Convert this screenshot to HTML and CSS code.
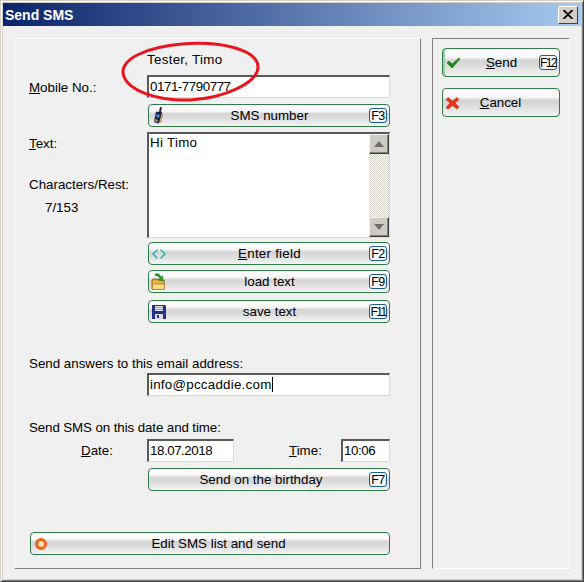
FILE: index.html
```html
<!DOCTYPE html>
<html lang="en">
<head>
  <meta charset="UTF-8">
  <title>Send SMS</title>
  <link rel="stylesheet" href="styles.css">
</head>
<body>
  <div class="window">
    <div class="titlebar">
      <span class="title">Send SMS</span>
      <span class="close"><svg width="10" height="9" viewBox="0 0 10 9"><path d="M0 0l9 9M1 0l9 9M9 0L0 9M10 0L1 9" fill="none" stroke="#000" stroke-width="1.200"/></svg></span>
    </div>
    <div class="content">
      <div class="panel-left">
        <svg class="ring" width="144" height="62" viewBox="0 0 144 62"><path d="M62 3C100 0 136 8 138 25C139 42 104 57 70 59C38 60 6 50 3 32C2 17 28 6 62 3Z" fill="none" stroke="#e8141f" stroke-width="3"/></svg>

        <div class="row row-name"><span></span><div class="name">Tester, Timo</div></div>
        <div class="row row-mobile">
          <label class="label label-mobile"><u>M</u>obile No.:</label>
          <div class="input digits">0171-7790777</div>
        </div>
        <div class="row row-btn1">
          <span></span>
          <div class="btn">
            <svg class="icon" width="12" height="18" viewBox="0 0 12 18"><path d="M8 0l2 .5-1 4 1 1-3 11-4-1-1-1 2-10 3 .5z" fill="#16243f"/><path d="M4.500 7l3.500 1-1 3-3-1z" fill="#3f86d8"/><path d="M3 12l3 1-.5 2-3-.8z" fill="#d98a3a"/><path d="M10 6l1 1-2 9-1-1z" fill="#c9803a"/></svg>
            <span class="btn-text">SMS number</span>
            <span class="key">F3</span>
          </div>
        </div>
        <div class="row row-text">
          <div class="text-labels">
            <label class="label"><u>T</u>ext:</label>
            <div class="label count-label">Characters/Rest:</div>
            <div class="label count">7/153</div>
          </div>
          <div class="textarea">
            <div class="textarea-body">Hi Timo</div>
            <div class="scrollbar">
              <span class="scroll-btn"><i class="arrow-up"></i></span>
              <span class="scroll-track"></span>
              <span class="scroll-btn"><i class="arrow-down"></i></span>
            </div>
          </div>
        </div>
        <div class="row row-btn2">
          <span></span>
          <div class="btn">
            <svg class="icon" width="14" height="12" viewBox="0 0 14 12"><path d="M5.500 1.500L1 6l4.500 4.500M8.500 1.500L13 6l-4.500 4.500" fill="none" stroke="#2ab5b5" stroke-width="1.500"/></svg>
            <span class="btn-text text-loose"><u>E</u>nter field</span>
            <span class="key">F2</span>
          </div>
        </div>
        <div class="row row-btn3">
          <span></span>
          <div class="btn">
            <svg class="icon icon-folder" width="16" height="18" viewBox="0 0 16 18"><path d="M1 8l1-2h4l1 1h6v9.500H1z" fill="#e8b23c" stroke="#8a6512"/><path d="M1.500 11h12l-.5 5.500H1.500z" fill="#f8dc84" stroke="#a87c1a" stroke-width=".7"/><path d="M4 1c3-1 5 0 6 3l2-1-.5 5L7 6.500 9 5.500C8 3.500 6 2.500 4 2.500z" fill="#1f9a2c" stroke="#0f6a1a" stroke-width=".4"/></svg>
            <span class="btn-text">load text</span>
            <span class="key">F9</span>
          </div>
        </div>
        <div class="row row-btn4">
          <span></span>
          <div class="btn">
            <svg class="icon" width="14" height="14" viewBox="0 0 14 14"><path d="M0 0h13l1 1v13H0z" fill="#24318c"/><path d="M3 1h8v5H3z" fill="#e6e6ee"/><path d="M3 2.500h8M3 4.500h8" stroke="#9a9ab0"/><path d="M3 9h8v5H3z" fill="#d8d8e6"/><path d="M5 10h2v3H5z" fill="#24318c"/></svg>
            <span class="btn-text">save text</span>
            <span class="key key-long">F11</span>
          </div>
        </div>

        <div class="label heading heading-email">Send answers to this email address:</div>
        <div class="row row-email">
          <span></span>
          <div class="input text-loose">info@pccaddie.com<i class="caret"></i></div>
        </div>

        <div class="label heading heading-date">Send SMS on this date and time:</div>
        <div class="row row-date">
          <label class="label label-date"><u>D</u>ate:</label>
          <div class="date-fields">
            <div class="input input-date digits">18.07.2018</div>
            <label class="label label-time"><u>T</u>ime:</label>
            <div class="input input-time digits">10:06</div>
          </div>
        </div>
        <div class="row row-birthday">
          <span></span>
          <div class="btn btn-birthday">
            <span class="btn-text">Send on the birthday</span>
            <span class="key">F7</span>
          </div>
        </div>
        <div class="btn btn-wide">
          <svg class="icon" width="14" height="14" viewBox="0 0 14 14"><circle cx="7" cy="7" r="4.500" fill="#ffd9b0" stroke="#f0641e" stroke-width="3"/></svg>
          <span class="btn-text">Edit SMS list and send</span>
        </div>
      </div>

      <div class="panel-right">
        <div class="btn btn-side btn-default">
          <svg class="icon" width="15" height="12" viewBox="0 0 15 12"><path d="M1 6l2-2 3 3 7-6 1 1-8 9z" fill="#1d8a1d" stroke="#0d5c0d" stroke-width=".5"/></svg>
          <span class="btn-text"><u>S</u>end</span>
          <span class="key key-long">F12</span>
        </div>
        <div class="btn btn-side btn-cancel">
          <svg class="icon" width="13" height="13" viewBox="0 0 13 13"><path d="M2 1l4.500 3.500L11 1l2 2-4 3.500 4 4-2 2-4.500-3.500L2 13 0 11l4-4.500L0 3z" fill="#f0341a" stroke="#b8240e" stroke-width=".5"/></svg>
          <span class="btn-text"><u>C</u>ancel</span>
        </div>
      </div>
    </div>
  </div>
</body>
</html>
```

FILE: styles.css
```css
* { box-sizing: border-box; }
body { margin: 0; font-family: "Liberation Sans", Arial, sans-serif; font-size: 13.33px; color: #000; }
u { text-decoration: underline; }

.window {
  width: 584px;
  height: 582px;
  padding: 3px;
  background: #f0f0f0;
  border: 1px solid;
  border-color: #d4d0c8 #404040 #404040 #d4d0c8;
  box-shadow: inset 1px 1px 0 #fff, inset -1px -1px 0 #808080, inset 2px 2px 0 #d4d0c8, inset -2px -2px 0 #d4d0c8;
  overflow: hidden;
}

.titlebar {
  height: 23px;
  margin: -1px -1px 0;
  padding: 0 3px 0 2px;
  display: flex;
  align-items: center;
  justify-content: space-between;
  background: linear-gradient(to right, #0a246a, #a6caf0);
}
.title { color: #fff; font-weight: bold; font-size: 14px; }
.close {
  width: 20px;
  height: 18px;
  display: flex;
  align-items: center;
  justify-content: center;
  background: #d4d0c8;
  border: 1px solid;
  border-color: #fff #404040 #404040 #fff;
}

.content { display: flex; padding: 12px 10px 0 10px; }

.panel-left {
  position: relative;
  width: 407px;
  height: 531px;
  padding: 12px 30px 0 14px;
  border: 1px solid;
  border-color: #fff #808080 #808080 #fff;
}
.ring { position: absolute; left: 105px; top: 2px; }

.panel-right {
  width: 139px;
  height: 531px;
  margin-left: 11px;
  padding: 9px 9px 0 9px;
  border: 1px solid;
  border-color: #808080 #fff #fff #808080;
}

.row { display: grid; grid-template-columns: 119px 1fr; align-items: center; }
.label { white-space: nowrap; }
.label-mobile { padding-top: 2px; }

.name { line-height: 18px; margin-left: -1px; letter-spacing: .3px; }
.row-mobile { margin-top: 6px; }
.row-btn1 { margin-top: 6px; }
.row-text { margin-top: 5px; align-items: start; }
.row-btn2 { margin-top: 4px; }
.row-btn3 { margin-top: 5px; }
.row-btn4 { margin-top: 7px; }

.heading { line-height: 16px; }
.heading-email { margin-top: 33px; }
.row-email { margin-top: 1px; }
.heading-date { margin-top: 24px; letter-spacing: -.1px; }
.row-date { margin-top: 3px; }
.row-birthday { margin-top: 6px; }
.label-date { padding-left: 52px; }

.text-labels { display: flex; flex-direction: column; padding-top: 4px; }
.count-label { margin-top: 26px; }
.count { margin-top: 8px; padding-left: 16px; }

.input {
  height: 23px;
  margin-left: -1px;
  padding: 2px 0 0 1px;
  background: #fff;
  border: 2px solid;
  border-color: #5a5a5a #dedad2 #dedad2 #5a5a5a;
  border-right-width: 1px;
  border-bottom-width: 1px;
  white-space: nowrap;
}
.digits { letter-spacing: -.45px; }
.text-loose { letter-spacing: .25px; }
.caret { display: inline-block; width: 1px; height: 15px; background: #000; vertical-align: -3px; }

.date-fields { display: flex; align-items: center; }
.input-date { width: 87px; flex: none; }
.label-time { margin-left: 55px; }
.input-time { width: 49px; margin-left: auto; }

.textarea {
  height: 106px;
  margin-left: -1px;
  display: flex;
  background: #fff;
  border: 2px solid;
  border-color: #5a5a5a #dedad2 #dedad2 #5a5a5a;
  border-right-width: 1px;
  border-bottom-width: 1px;
}
.textarea-body { flex: 1; padding: 1px 0 0 1px; letter-spacing: .3px; }
.scrollbar { width: 20px; display: flex; flex-direction: column; }
.scroll-btn {
  height: 20px;
  display: flex;
  align-items: center;
  justify-content: center;
  background: #cfcbc3;
  border: 1px solid;
  border-color: #f4f2ee #404040 #404040 #f4f2ee;
  box-shadow: inset -1px -1px 0 #808080;
}
.scroll-track { flex: 1; background: repeating-conic-gradient(#d4d0c8 0 25%, #fff 0 50%) 0 0 / 2px 2px; }
.arrow-up { border: 5.5px solid transparent; border-top: 0; border-bottom: 6px solid #6e6e6e; width: 0; }
.arrow-down { border: 5.5px solid transparent; border-bottom: 0; border-top: 6px solid #6e6e6e; width: 0; }

.btn {
  position: relative;
  height: 23px;
  display: flex;
  align-items: center;
  justify-content: center;
  padding-left: 1px;
  background: linear-gradient(to bottom, #fff 0, #f8f8f8 30%, #d4d4d4 42%, #dadada 58%, #f4f4f4 100%);
  border: 1px solid #2f7d46;
  border-radius: 4px;
}
.btn-text { white-space: nowrap; }
.icon { position: absolute; left: 3px; top: 50%; transform: translateY(-50%); }
.icon-folder { left: 2px; }
.key {
  position: absolute;
  right: 2px;
  top: 3px;
  width: 18px;
  height: 15px;
  display: flex;
  align-items: center;
  justify-content: center;
  font-size: 12.5px;
  letter-spacing: -.5px;
  background: #f4f6f8;
  border: 1px solid #1f5a8c;
  border-radius: 3px;
}
.key-long { font-size: 12px; letter-spacing: -1.6px; }

.btn-birthday { padding-left: 0; padding-right: 16px; }
.btn-wide { width: 360px; margin: 41px 0 0 1px; padding-left: 17px; }

.btn-side { height: 29px; width: 118px; margin-bottom: 11px; }
.btn-default { box-shadow: inset 2px 0 0 #9ed0a8; }
.btn-cancel { padding-right: 2px; }
.btn-side .key { top: 6px; }
```
